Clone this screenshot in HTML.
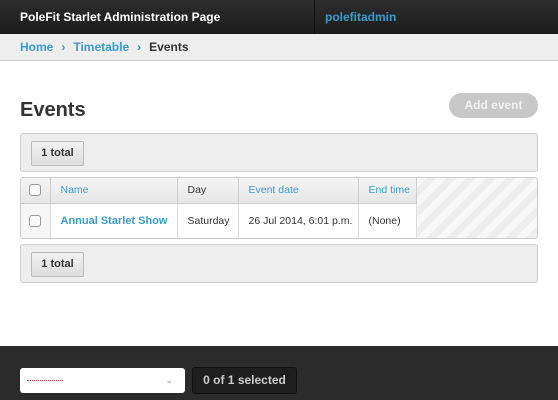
<!DOCTYPE html>
<html><head><style>
*{box-sizing:border-box;margin:0;padding:0}
body{width:558px;height:400px;background:#fff;font-family:"Liberation Sans",Arial,sans-serif;position:relative;overflow:hidden;font-size:12px}
.top{position:absolute;left:0;top:0;width:558px;height:34px;background:linear-gradient(#2d2d2d,#1c1c1c)}
.top .t{position:absolute;left:20px;top:10px;color:#fff;font-weight:bold;font-size:12px}
.top .sep{position:absolute;left:314px;top:0;width:1px;height:34px;background:#111}
.top .u{position:absolute;left:325px;top:10px;color:#3a9ccc;font-weight:bold;font-size:12px}
.bc{position:absolute;left:0;top:34px;width:558px;height:27px;background:#eee;border-bottom:1px solid #ccc;padding:6px 20px;font-weight:bold;font-size:12px;color:#333}
.bc a{color:#3a9ccc}
.bc span{color:#3a9ccc;margin:0 8px}
h1{position:absolute;left:20px;top:99px;font-size:20px;color:#333}
.add{position:absolute;left:449px;top:93px;width:89px;height:25px;border-radius:13px;background:#c8c8c8;color:#f2f2f2;font-weight:bold;text-align:center;line-height:25px}
.bar{position:absolute;left:20px;width:518px;height:39px;background:#eee;border:1px solid #ccc;border-radius:3px}
.tot{position:absolute;left:10px;top:7px;width:53px;height:25px;background:linear-gradient(#f2f2f2,#ddd);border:1px solid #bbb;border-radius:2px;font-weight:bold;font-size:11px;color:#333;text-align:center;line-height:23px}
.tbl{position:absolute;left:20px;top:177px;width:518px;height:62px;border:1px solid #ccc;border-radius:3px;overflow:hidden;background:repeating-linear-gradient(135deg,#f8f8f8 0 7px,#eee 7px 14px)}
table{border-collapse:collapse;table-layout:fixed;width:395px;font-size:10.5px;position:absolute;left:0;top:0}
th,td{white-space:nowrap;overflow:hidden}
th{height:25px;background:linear-gradient(#f5f5f5,#e6e6e6);font-weight:normal;text-align:left;color:#3a9ccc;border-right:1px solid #ccc;border-bottom:1px solid #ccc;padding:0 10px}
td{height:35px;background:#fff;border-right:1px solid #ddd;padding:0 10px;color:#333}
.cb{width:12px;height:12px;border:1px solid #999;border-radius:3px;background:#fafafa;margin:auto}
.foot{position:absolute;left:0;top:346px;width:558px;height:54px;background:#2b2b2b}
.sel{position:absolute;left:20px;top:22px;width:165px;height:25px;background:#fff;border-radius:3px}
.sel i{position:absolute;left:7px;top:12px;width:36px;border-top:1px dotted #a33}
.sel b{position:absolute;right:12px;top:7px;color:#888;font-size:9px;font-weight:normal}
.cnt{position:absolute;left:192px;top:21px;width:105px;height:27px;background:#1e1e1e;border:1px solid #111;border-radius:3px;color:#ccc;font-weight:bold;text-align:center;line-height:25px}
</style></head><body>
<div class="top"><div class="t">PoleFit Starlet Administration Page</div><div class="sep"></div><div class="u">polefitadmin</div></div>
<div class="bc"><a>Home</a><span>›</span><a>Timetable</a><span>›</span>Events</div>
<h1>Events</h1>
<div class="add">Add event</div>
<div class="bar" style="top:133px"><div class="tot">1 total</div></div>
<div class="tbl"><table>
<colgroup><col style="width:29px"><col style="width:127px"><col style="width:61px"><col style="width:120px"><col style="width:58px"></colgroup>
<tr><th style="padding:0"><div class="cb"></div></th><th>Name</th><th style="color:#333">Day</th><th>Event date</th><th>End time</th></tr>
<tr><td style="padding:0;background:#f6f6f6"><div class="cb"></div></td><td style="color:#3a9ccc;font-weight:bold;font-size:11px">Annual Starlet Show</td><td>Saturday</td><td>26 Jul 2014, 6:01 p.m.</td><td>(None)</td></tr>
</table></div>
<div class="bar" style="top:244px;height:39px"><div class="tot">1 total</div></div>
<div class="foot"><div class="sel"><i></i><b>⌄</b></div><div class="cnt">0 of 1 selected</div></div>
</body></html>
